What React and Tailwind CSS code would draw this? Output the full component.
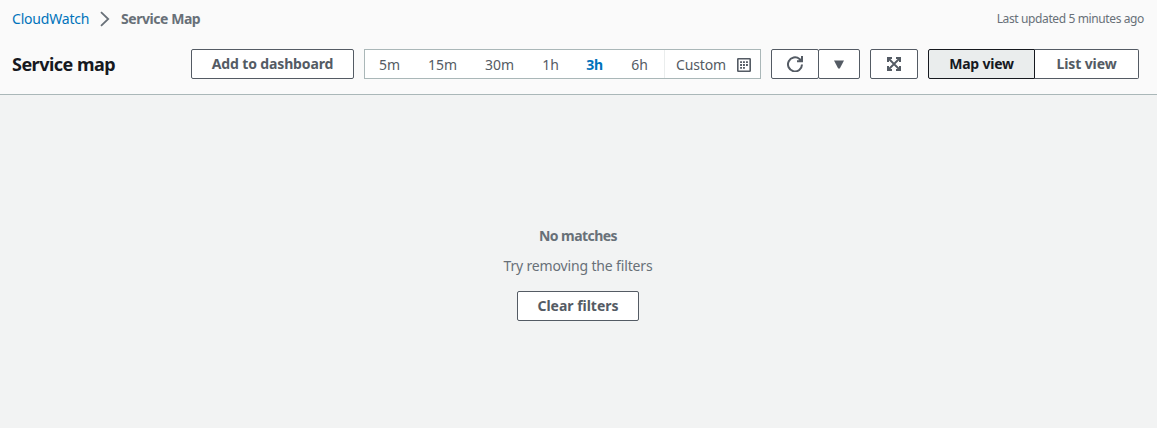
import React from "react";

const ranges = [
  { label: "5m", cls: "w-[49px] tracking-[-0.1px]" },
  { label: "15m", cls: "w-[57px] tracking-[-0.1px]" },
  { label: "30m", cls: "w-[57px] tracking-[-0.1px]" },
  { label: "1h", cls: "w-[45px] tracking-[-0.1px]" },
  { label: "3h", cls: "w-[43px] font-bold text-[#0073bb] tracking-[-0.2px]" },
  { label: "6h", cls: "w-[47px] tracking-[-0.1px]" },
];

const button =
  "flex h-[30px] shrink-0 items-center justify-center border border-[#545b64] bg-white text-[14px] leading-[20px] font-bold text-[#545b64] whitespace-nowrap";

function ChevronIcon() {
  return (
    <svg className="ml-[11px] mr-[11px] h-4 w-[10px] shrink-0" viewBox="0 0 10 16" fill="none" stroke="#687078" strokeWidth="1.8">
      <path d="M1 1.2L8.2 8L1 14.8" />
    </svg>
  );
}

function CalendarIcon() {
  return (
    <svg className="h-[14px] w-[14px] shrink-0" viewBox="0 0 14 14" fill="none">
      <rect x=".8" y=".8" width="12.4" height="12.4" rx=".5" stroke="#545b64" strokeWidth="1.6" />
      <path
        d="M6 3.2h1.9v1.9H6zM9 3.2h1.9v1.9H9zM3.1 3.2h1.9v1.9H3.1zM3.1 6h1.9v1.9H3.1zM6 6h1.9v1.9H6zM9 6h1.9v1.9H9zM3.1 8.9h1.9v1.9H3.1zM6 8.9h1.9v1.9H6z"
        fill="#545b64"
      />
    </svg>
  );
}

function RefreshIcon() {
  return (
    <svg className="h-4 w-4" viewBox="0 0 16 16" fill="none" stroke="#545b64" strokeWidth="2">
      <path d="M15 8.5A7 7 0 1 1 12.5 3L14.5 5" />
      <path d="M15 0V5.2H10" />
      <path d="M15 1.5V5H11.5Z" fill="#545b64" stroke="none" />
    </svg>
  );
}

function ExpandIcon() {
  return (
    <svg className="h-[14px] w-[14px]" viewBox="0 0 14 14" fill="none" stroke="#545b64" strokeWidth="2">
      <path d="M1 5V1H5M9 1H13V5M13 9V13H9M5 13H1V9" />
      <path d="M1 1L13 13M13 1L1 13" strokeWidth="1.8" />
    </svg>
  );
}

export default function App() {
  return (
    <div className="flex h-screen flex-col overflow-hidden bg-[#f2f3f3] font-['Noto_Sans','Open_Sans',sans-serif] text-[14px] leading-[20px] text-[#545b64]">
      <header className="flex h-[95px] shrink-0 flex-col border-b border-[#aab7b8] bg-[#fafafa]">
        <div className="flex h-[38px] items-center justify-between pl-3 pr-[13px]">
          <nav className="flex items-center whitespace-nowrap">
            <a className="w-[77px] tracking-[-0.2px] text-[#0073bb]">CloudWatch</a>
            <ChevronIcon />
            <span className="font-bold tracking-[-0.45px] text-[#687078]">Service Map</span>
          </nav>
          <span className="text-[12px] tracking-[-0.38px] text-[#687078]">Last updated 5 minutes ago</span>
        </div>
        <div className="flex pl-3 pr-[18px] pt-[11px]">
          <h1 className="flex h-[30px] w-[179px] items-center text-[18px] font-bold tracking-[-0.52px] whitespace-nowrap text-[#16191f]">
            Service map
          </h1>
          <button className={button + " w-[163px] rounded-[2px] tracking-[-0.13px]"}>Add to dashboard</button>
          <div className="ml-[10px] flex h-[30px] w-[397px] shrink-0 border border-[#aab7b8] bg-white">
            {ranges.map((r) => (
              <button key={r.label} className={"flex h-full shrink-0 items-center justify-center pt-[2px] " + r.cls}>
                {r.label}
              </button>
            ))}
            <div className="w-px shrink-0" />
            <button className="flex h-full flex-1 items-center justify-between border-l border-[#eaeded] pl-[11px] pr-[9px] pt-[2px]">
              <span className="tracking-[-0.15px]">Custom</span>
              <CalendarIcon />
            </button>
          </div>
          <div className="ml-[10px] flex">
            <button className={button + " w-12 rounded-[2px]"}>
              <RefreshIcon />
            </button>
            <button className={button + " -ml-px w-[42px] rounded-[2px]"}>
              <svg className="h-[9px] w-[10px]" viewBox="0 0 10 9" fill="#545b64">
                <path d="M0 .5H10L5.8 8.5H4.2Z" />
              </svg>
            </button>
          </div>
          <button className={button + " ml-[10px] w-12 rounded-[2px]"}>
            <ExpandIcon />
          </button>
          <div className="ml-[10px] flex">
            <button className="flex h-[30px] w-[107px] items-center justify-center rounded-l-[2px] border border-[#16191f] bg-[#eaeded] font-bold tracking-[-0.2px] text-[#16191f]">
              Map view
            </button>
            <button className={button + " w-[104px] rounded-r-[2px] border-l-0 tracking-[-0.1px]"}>List view</button>
          </div>
        </div>
      </header>
      <main className="flex flex-1 flex-col items-center pr-px pt-[131px] text-[#687078]">
        <p className="font-bold tracking-[-0.55px]">No matches</p>
        <p className="mt-[10px] tracking-[-0.15px]">Try removing the filters</p>
        <button className={button + " mt-[15px] w-[122px] rounded-[2px] tracking-[-0.02px]"}>Clear filters</button>
      </main>
    </div>
  );
}
